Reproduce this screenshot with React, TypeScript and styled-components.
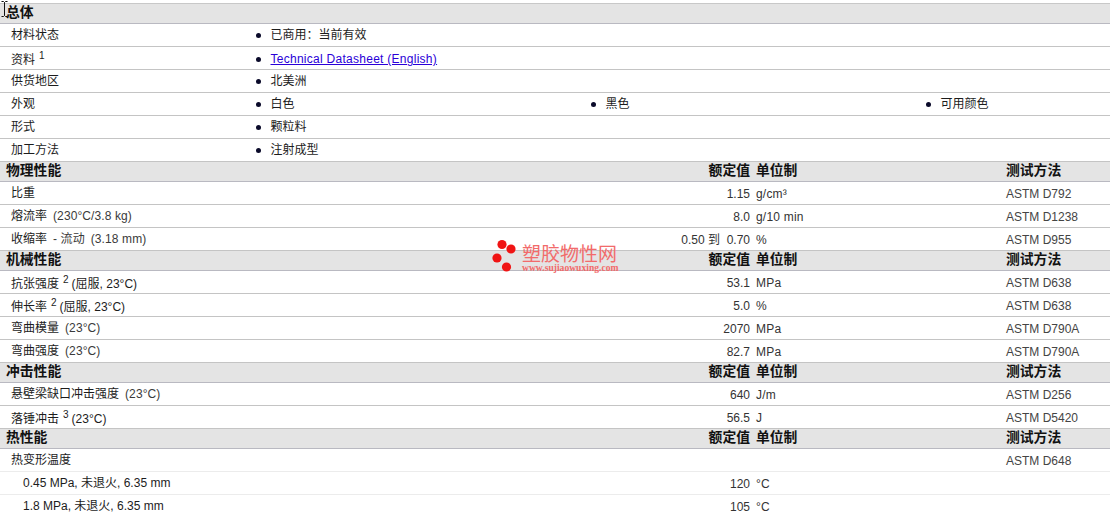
import React from "react";
import styled, { createGlobalStyle } from "styled-components";

const Global = createGlobalStyle`
  html, body { margin: 0; padding: 0; background: #fff; overflow: hidden; }
  body { font-family: "Liberation Sans", "Noto Sans CJK SC", sans-serif; font-size: 12px; color: #2c2c2c; }
`;

const Page = styled.div`
  position: relative;
  width: 1110px;
  height: 514px;
  padding-top: 3px;
  box-sizing: border-box;
  overflow: hidden;
`;

const HeaderRow = styled.div`
  display: grid;
  grid-template-columns: 380px 370px 6px 250px 104px;
  height: 19px;
  line-height: 18px;
  border-bottom: 1px solid #b9b9c1;
  background-color: #e4e4e4;
  background-image: radial-gradient(#dcdcdc 0.5px, transparent 0.6px);
  background-size: 4px 4px;
  font-weight: bold;
  font-size: 13.8px;
  color: #111;

  &:first-child {
    border-top: 1px solid #c8c8c8;
  }
`;

const HeaderTitle = styled.div`
  padding-left: 6px;
`;

const HeaderValue = styled.div`
  text-align: right;
  grid-column: 2;
`;

const HeaderCell = styled.div<{ $col: number }>`
  grid-column: ${(p) => p.$col};
`;

const GeneralRow = styled.div`
  display: grid;
  grid-template-columns: 255px 335px 335px 185px;
  height: 22px;
  line-height: 22px;
  border-bottom: 1px solid #c4c4c4;
`;

const DataRow = styled.div<{ $light?: boolean }>`
  display: grid;
  grid-template-columns: 380px 370px 6px 250px 104px;
  height: 22px;
  line-height: 22px;
  border-bottom: 1px solid ${(p) => (p.$light ? "#ececec" : "#c4c4c4")};
`;

const Label = styled.div<{ $indent?: boolean; $sup?: boolean }>`
  padding-left: ${(p) => (p.$indent ? "23px" : "11px")};
  padding-top: ${(p) => (p.$sup ? "2px" : "0")};
  white-space: nowrap;
  color: #1c1c1c;
`;

const Cond = styled.span`
  margin-left: 6px;
  letter-spacing: 0.1px;
  color: #3a3a3a;
`;

const Sup = styled.sup`
  font-size: 10px;
  line-height: 0;
  margin: 0 3px 0 4px;
  vertical-align: 5px;
`;

const BulletCell = styled.div`
  display: flex;
  align-items: center;
  gap: 10px;
  color: #1c1c1c;
`;

const Dot = styled.span`
  width: 5px;
  height: 5px;
  border-radius: 50%;
  background: #0a0a2a;
  margin-left: 0.5px;
  flex: none;
`;

const DocLink = styled.a`
  color: #2a00d8;
  text-decoration: underline;
  letter-spacing: 0.27px;
`;

const Value = styled.div`
  grid-column: 2;
  text-align: right;
  white-space: pre;
  padding-top: 1px;
  color: #333;
`;

const Unit = styled.div`
  grid-column: 4;
  padding-top: 1px;
  letter-spacing: 0.2px;
  color: #333;
`;

const Method = styled.div`
  grid-column: 5;
  padding-top: 1px;
  color: #444;
`;

const Watermark = styled.div`
  position: absolute;
  left: 490px;
  top: 238px;
  display: flex;
  gap: 4px;
  pointer-events: none;
`;

const WatermarkText = styled.div`
  display: flex;
  flex-direction: column;
`;

const WatermarkName = styled.div`
  font-size: 19px;
  line-height: 18px;
  margin-top: 8px;
  color: #f26b6b;
  white-space: nowrap;
`;

const WatermarkUrl = styled.div`
  font-family: "Liberation Serif", serif;
  font-weight: bold;
  font-size: 9.6px;
  line-height: 8px;
  color: #f26b6b;
  white-space: nowrap;
`;

const Cursor = styled.svg`
  position: absolute;
  left: 1px;
  top: 1px;
`;

type Data = { label: React.ReactNode; value?: string; unit?: string; method?: string; light?: boolean; indent?: boolean; sup?: boolean };

const general: [React.ReactNode, React.ReactNode[], boolean?][] = [
  ["材料状态", ["已商用：当前有效"]],
  [<>资料<Sup>1</Sup></>, [<DocLink href="#">Technical Datasheet (English)</DocLink>], true],
  ["供货地区", ["北美洲"]],
  ["外观", ["白色", "黑色", "可用颜色"]],
  ["形式", ["颗粒料"]],
  ["加工方法", ["注射成型"]],
];

const sections: { title: string; rows: Data[] }[] = [
  {
    title: "物理性能",
    rows: [
      { label: "比重", value: "1.15", unit: "g/cm³", method: "ASTM D792" },
      { label: <>熔流率<Cond>(230°C/3.8 kg)</Cond></>, value: "8.0", unit: "g/10 min", method: "ASTM D1238" },
      { label: <>收缩率<Cond>- 流动</Cond><Cond>(3.18 mm)</Cond></>, value: "0.50 到  0.70", unit: "%", method: "ASTM D955" },
    ],
  },
  {
    title: "机械性能",
    rows: [
      { label: <>抗张强度<Sup>2</Sup>(屈服, 23°C)</>, value: "53.1", unit: "MPa", method: "ASTM D638", sup: true },
      { label: <>伸长率<Sup>2</Sup>(屈服, 23°C)</>, value: "5.0", unit: "%", method: "ASTM D638", sup: true },
      { label: <>弯曲模量<Cond>(23°C)</Cond></>, value: "2070", unit: "MPa", method: "ASTM D790A" },
      { label: <>弯曲强度<Cond>(23°C)</Cond></>, value: "82.7", unit: "MPa", method: "ASTM D790A" },
    ],
  },
  {
    title: "冲击性能",
    rows: [
      { label: <>悬壁梁缺口冲击强度<Cond>(23°C)</Cond></>, value: "640", unit: "J/m", method: "ASTM D256" },
      { label: <>落锤冲击<Sup>3</Sup>(23°C)</>, value: "56.5", unit: "J", method: "ASTM D5420", sup: true },
    ],
  },
  {
    title: "热性能",
    rows: [
      { label: "热变形温度", method: "ASTM D648", light: true },
      { label: "0.45 MPa, 未退火, 6.35 mm", value: "120", unit: "°C", light: true, indent: true },
      { label: "1.8 MPa, 未退火, 6.35 mm", value: "105", unit: "°C", light: true, indent: true },
    ],
  },
];

export default function App() {
  return (
    <Page>
      <Global />
      <HeaderRow>
        <HeaderTitle>总体</HeaderTitle>
      </HeaderRow>
      {general.map(([label, items, sup], i) => (
        <GeneralRow key={i}>
          <Label $sup={sup}>{label}</Label>
          {items.map((item, j) => (
            <BulletCell key={j}>
              <Dot />
              <span>{item}</span>
            </BulletCell>
          ))}
        </GeneralRow>
      ))}
      {sections.map((s) => (
        <React.Fragment key={s.title}>
          <HeaderRow>
            <HeaderTitle>{s.title}</HeaderTitle>
            <HeaderValue>额定值</HeaderValue>
            <HeaderCell $col={4}>单位制</HeaderCell>
            <HeaderCell $col={5}>测试方法</HeaderCell>
          </HeaderRow>
          {s.rows.map((r, i) => (
            <DataRow key={i} $light={r.light}>
              <Label $indent={r.indent} $sup={r.sup}>{r.label}</Label>
              <Value>{r.value}</Value>
              <Unit>{r.unit}</Unit>
              <Method>{r.method}</Method>
            </DataRow>
          ))}
        </React.Fragment>
      ))}
      <Watermark>
        <svg width="28" height="36" viewBox="0 0 28 36">
          <circle cx="12" cy="6.5" r="4.6" fill="#f01414" />
          <circle cx="21" cy="11" r="4.6" fill="#f01414" />
          <circle cx="7" cy="20" r="4.6" fill="#f01414" />
          <circle cx="16.5" cy="29" r="4.6" fill="#f01414" />
        </svg>
        <WatermarkText>
          <WatermarkName>塑胶物性网</WatermarkName>
          <WatermarkUrl>www.sujiaowuxing.com</WatermarkUrl>
        </WatermarkText>
      </Watermark>
      <Cursor width="7" height="16" viewBox="0 0 7 16">
        <path d="M0.5 0.5H2.5L3.5 1.5L4.5 0.5H6.5M3.5 1.5V14.5M0.5 15.5H2.5L3.5 14.5L4.5 15.5H6.5" fill="none" stroke="#111" strokeWidth="1" />
      </Cursor>
    </Page>
  );
}
